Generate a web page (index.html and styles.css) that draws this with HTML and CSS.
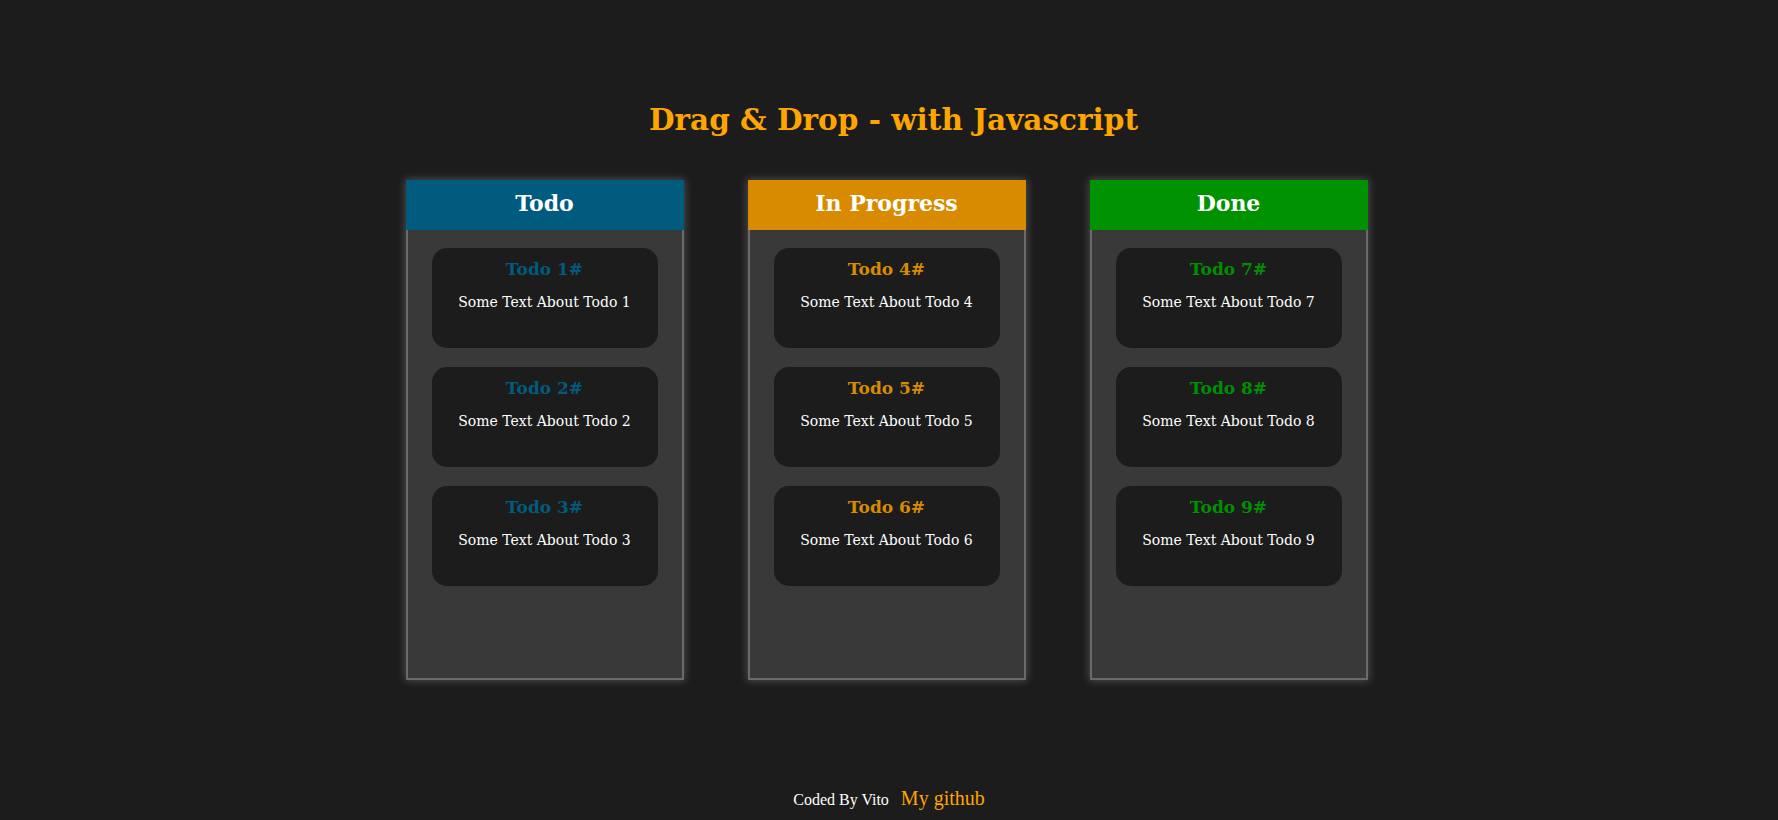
FILE: index.html
```html
<!DOCTYPE html>
<html lang="en">
<head>
<meta charset="utf-8">
<title>Drag & Drop</title>
<link rel="stylesheet" href="styles.css">
</head>
<body>
<h1 class="title">Drag &amp; Drop - with Javascript</h1>
<main class="board">
  <section class="column column-todo">
    <h2 class="column-head">Todo</h2>
    <div class="column-body">
      <div class="card"><h3 class="card-title">Todo 1#</h3><p class="card-text">Some Text About Todo 1</p></div>
      <div class="card"><h3 class="card-title">Todo 2#</h3><p class="card-text">Some Text About Todo 2</p></div>
      <div class="card"><h3 class="card-title">Todo 3#</h3><p class="card-text">Some Text About Todo 3</p></div>
    </div>
  </section>
  <section class="column column-progress">
    <h2 class="column-head">In Progress</h2>
    <div class="column-body">
      <div class="card"><h3 class="card-title">Todo 4#</h3><p class="card-text">Some Text About Todo 4</p></div>
      <div class="card"><h3 class="card-title">Todo 5#</h3><p class="card-text">Some Text About Todo 5</p></div>
      <div class="card"><h3 class="card-title">Todo 6#</h3><p class="card-text">Some Text About Todo 6</p></div>
    </div>
  </section>
  <section class="column column-done">
    <h2 class="column-head">Done</h2>
    <div class="column-body">
      <div class="card"><h3 class="card-title">Todo 7#</h3><p class="card-text">Some Text About Todo 7</p></div>
      <div class="card"><h3 class="card-title">Todo 8#</h3><p class="card-text">Some Text About Todo 8</p></div>
      <div class="card"><h3 class="card-title">Todo 9#</h3><p class="card-text">Some Text About Todo 9</p></div>
    </div>
  </section>
</main>
<footer class="footer">
  <span class="credit">Coded By Vito</span>
  <a class="github" href="#">My github</a>
</footer>
</body>
</html>
```
FILE: styles.css
```css
html, body {
  margin: 0;
  padding: 0;
  background: #1c1c1c;
  height: 100%;
}
body {
  font-family: "DejaVu Serif", "Liberation Serif", serif;
  color: #fff;
  overflow: hidden;
}
.title {
  margin: 0;
  padding-top: 101px;
  padding-left: 9px;
  text-align: center;
  font-size: 29.5px;
  line-height: 38px;
  font-weight: bold;
  color: #ffa500;
}
.board {
  display: flex;
  justify-content: center;
  gap: 64px;
  margin-top: 41px;
  padding-right: 5px;
}
.column {
  width: 278px;
  height: 500px;
  box-sizing: border-box;
  background: #393939;
  box-shadow: inset 0 0 0 2px #6a6a6a, 0 0 8px 1px rgba(255, 255, 255, 0.22);
  display: flex;
  flex-direction: column;
}
.column-head {
  margin: 0;
  height: 50px;
  line-height: 47px;
  text-align: center;
  font-size: 22px;
  font-weight: bold;
  color: #fff;
}
.column-todo .column-head { background: #005b7e; }
.column-progress .column-head { background: #d88a00; }
.column-done .column-head { background: #009200; }
.column-todo .card-title { color: #005b7e; }
.column-progress .card-title { color: #d88a00; }
.column-done .card-title { color: #008f00; }
.column-body {
  display: flex;
  flex-direction: column;
  align-items: center;
  gap: 19px;
  padding-top: 18px;
}
.card {
  width: 226px;
  height: 100px;
  box-sizing: border-box;
  background: #1c1c1c;
  border-radius: 15px;
  padding-top: 10px;
  text-align: center;
}
.card-title {
  margin: 0;
  font-size: 17px;
  line-height: 22px;
  font-weight: bold;
}
.card-text {
  margin: 12px 0 0;
  font-size: 14px;
  line-height: 20px;
}
.footer {
  margin-top: 107px;
  display: flex;
  justify-content: center;
  align-items: baseline;
  gap: 12px;
  font-family: "Liberation Serif", serif;
}
.credit {
  font-size: 16px;
  color: #fff;
}
.github {
  font-size: 20px;
  color: #ffa500;
  text-decoration: none;
}
```
